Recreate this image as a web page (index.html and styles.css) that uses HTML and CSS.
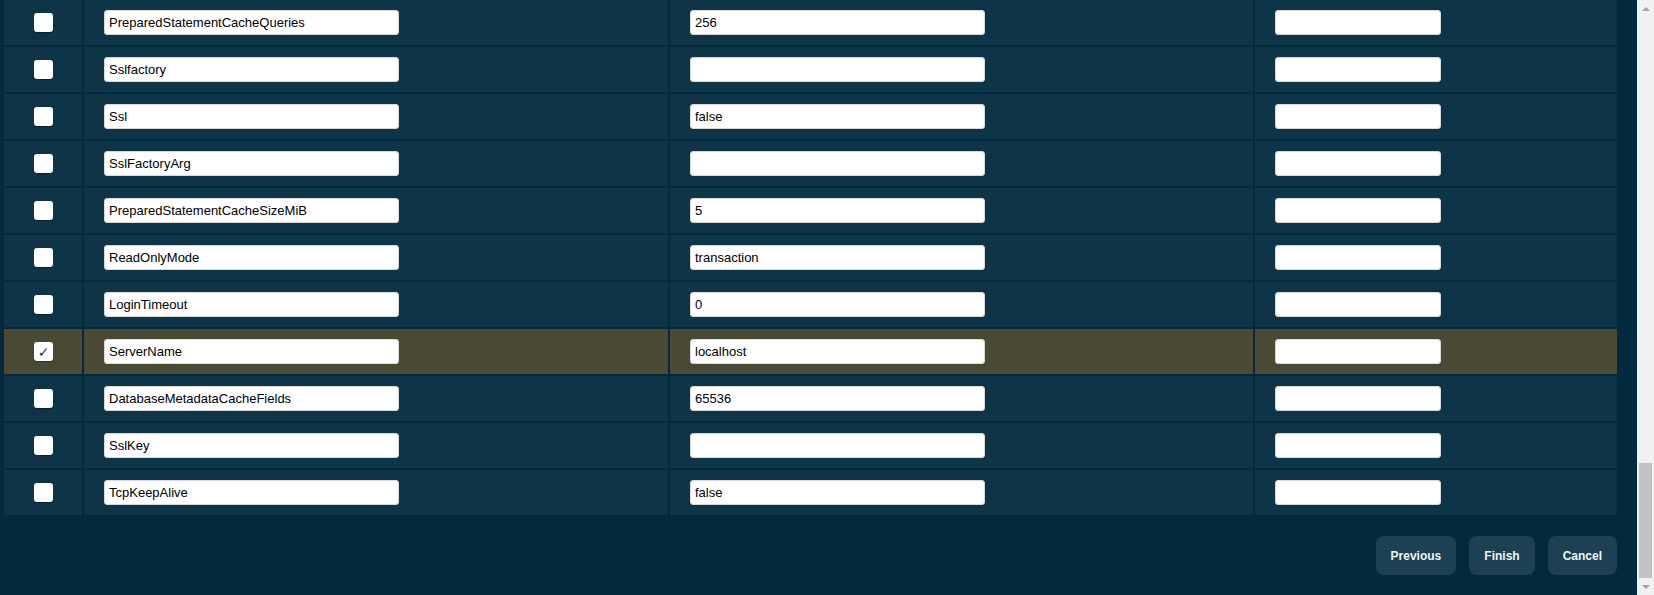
FILE: index.html
```html
<!DOCTYPE html>
<html>
<head>
<meta charset="utf-8">
<link rel="stylesheet" href="styles.css">
</head>
<body>
<div class="page">
  <div class="table">
    <div class="row"><div class="cell c1"><span class="cb"></span></div><div class="cell"><input class="inp" value="PreparedStatementCacheQueries"></div><div class="cell"><input class="inp" value="256"></div><div class="cell"><input class="inp small" value=""></div></div>
    <div class="row"><div class="cell c1"><span class="cb"></span></div><div class="cell"><input class="inp" value="Sslfactory"></div><div class="cell"><input class="inp" value=""></div><div class="cell"><input class="inp small" value=""></div></div>
    <div class="row"><div class="cell c1"><span class="cb"></span></div><div class="cell"><input class="inp" value="Ssl"></div><div class="cell"><input class="inp" value="false"></div><div class="cell"><input class="inp small" value=""></div></div>
    <div class="row"><div class="cell c1"><span class="cb"></span></div><div class="cell"><input class="inp" value="SslFactoryArg"></div><div class="cell"><input class="inp" value=""></div><div class="cell"><input class="inp small" value=""></div></div>
    <div class="row"><div class="cell c1"><span class="cb"></span></div><div class="cell"><input class="inp" value="PreparedStatementCacheSizeMiB"></div><div class="cell"><input class="inp" value="5"></div><div class="cell"><input class="inp small" value=""></div></div>
    <div class="row"><div class="cell c1"><span class="cb"></span></div><div class="cell"><input class="inp" value="ReadOnlyMode"></div><div class="cell"><input class="inp" value="transaction"></div><div class="cell"><input class="inp small" value=""></div></div>
    <div class="row"><div class="cell c1"><span class="cb"></span></div><div class="cell"><input class="inp" value="LoginTimeout"></div><div class="cell"><input class="inp" value="0"></div><div class="cell"><input class="inp small" value=""></div></div>
    <div class="row selected"><div class="cell c1"><span class="cb checked">✓</span></div><div class="cell"><input class="inp" value="ServerName"></div><div class="cell"><input class="inp" value="localhost"></div><div class="cell"><input class="inp small" value=""></div></div>
    <div class="row"><div class="cell c1"><span class="cb"></span></div><div class="cell"><input class="inp" value="DatabaseMetadataCacheFields"></div><div class="cell"><input class="inp" value="65536"></div><div class="cell"><input class="inp small" value=""></div></div>
    <div class="row"><div class="cell c1"><span class="cb"></span></div><div class="cell"><input class="inp" value="SslKey"></div><div class="cell"><input class="inp" value=""></div><div class="cell"><input class="inp small" value=""></div></div>
    <div class="row"><div class="cell c1"><span class="cb"></span></div><div class="cell"><input class="inp" value="TcpKeepAlive"></div><div class="cell"><input class="inp" value="false"></div><div class="cell"><input class="inp small" value=""></div></div>
  </div>
  <div class="actions">
    <button class="btn">Previous</button>
    <button class="btn">Finish</button>
    <button class="btn">Cancel</button>
  </div>
</div>
<div class="scrollbar">
  <div class="arrow up"></div>
  <div class="track"><div class="thumb"></div></div>
  <div class="arrow down"></div>
</div>
</body>
</html>
```
FILE: styles.css
```css
html, body {
  margin: 0;
  padding: 0;
  height: 595px;
  overflow: hidden;
  background: #032a3c;
}
body {
  font-family: "Liberation Sans", Arial, sans-serif;
}
.page {
  width: 1637px;
  padding-left: 4px;
  box-sizing: border-box;
}
.table {
  display: flex;
  flex-direction: column;
  gap: 2px;
  width: 1613px;
}
.row {
  display: grid;
  grid-template-columns: 78px 584px 583px 362px;
  gap: 2px;
  height: 45px;
}
.cell {
  background: #0e3547;
  display: flex;
  align-items: center;
  padding-left: 20px;
}
.row.selected .cell {
  background: #4a4a34;
}
.cell.c1 {
  padding-left: 0;
  justify-content: center;
}
.cb {
  width: 19px;
  height: 19px;
  background: #ffffff;
  border-radius: 3px;
  box-shadow: 0 1px 1px rgba(0,0,0,0.35);
  display: flex;
  align-items: center;
  justify-content: center;
  font-size: 14px;
  line-height: 1;
  color: #2b3a55;
  font-family: "DejaVu Sans", sans-serif;
  margin-left: 1px;
}
.inp {
  width: 295px;
  height: 25px;
  box-sizing: border-box;
  border: 1px solid #d8d8d8;
  border-radius: 3px;
  background: #ffffff;
  padding: 0 4px;
  font-family: "Liberation Sans", Arial, sans-serif;
  font-size: 13px;
  color: #000;
  outline: none;
  margin: 0;
}
.inp.small {
  width: 166px;
}
.actions {
  display: flex;
  justify-content: flex-end;
  gap: 13px;
  width: 1613px;
  margin-top: 21px;
}
.btn {
  height: 39px;
  padding: 0 15px;
  border: none;
  border-radius: 8px;
  background: #1d4152;
  color: #eef4f7;
  font-family: "Liberation Sans", Arial, sans-serif;
  font-size: 12px;
  font-weight: bold;
}
.scrollbar {
  position: fixed;
  top: 0;
  right: 0;
  width: 17px;
  height: 595px;
  background: #f1f1f1;
  display: flex;
  flex-direction: column;
}
.arrow {
  height: 17px;
  flex: none;
  display: flex;
  align-items: center;
  justify-content: center;
}
.arrow.up::before {
  content: "";
  border-left: 4px solid transparent;
  border-right: 4px solid transparent;
  border-bottom: 4px solid #a3a3a3;
}
.arrow.down::before {
  content: "";
  border-left: 4px solid transparent;
  border-right: 4px solid transparent;
  border-top: 4px solid #a3a3a3;
}
.track {
  flex: 1;
  position: relative;
}
.thumb {
  position: absolute;
  left: 2px;
  right: 2px;
  top: 446px;
  height: 115px;
  background: #c1c1c1;
}
```
